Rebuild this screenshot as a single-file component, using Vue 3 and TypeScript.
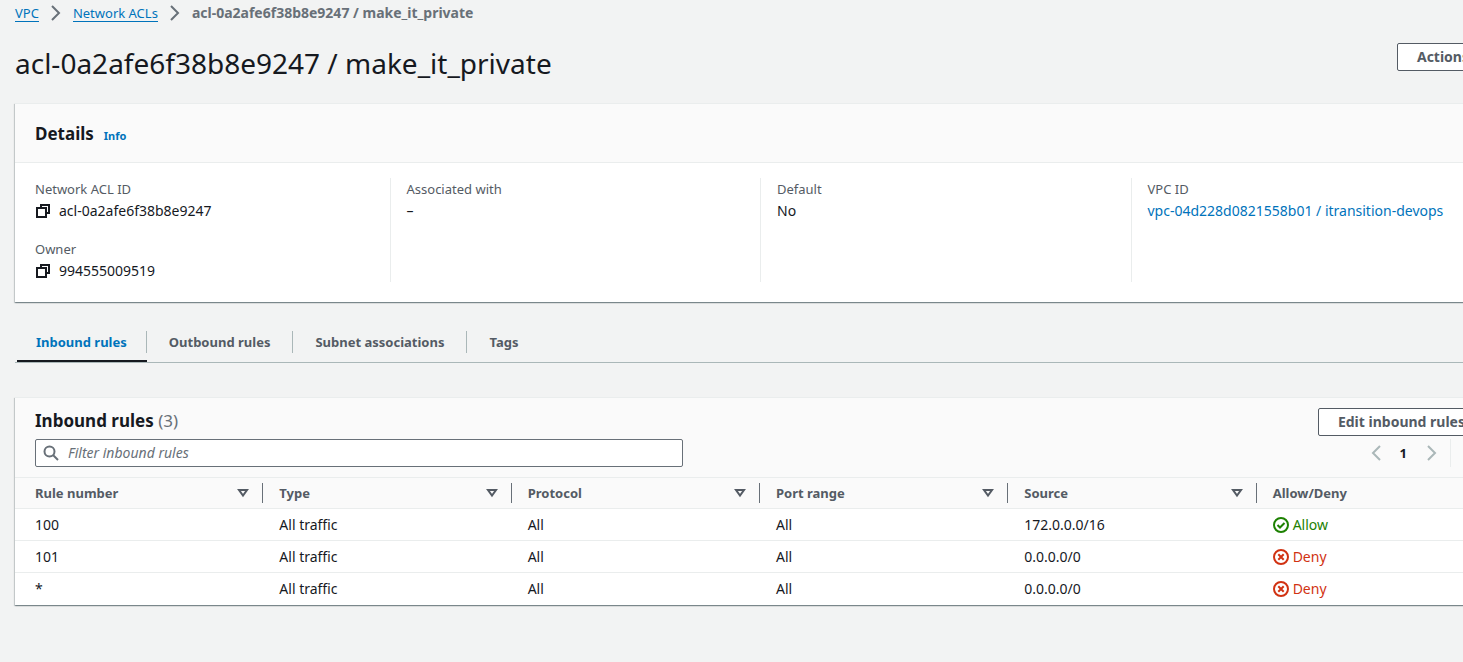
<script setup lang="ts">
import { ref } from 'vue'

interface Rule {
  number: string
  type: string
  protocol: string
  ports: string
  source: string
  allow: boolean
}

const tabs: string[] = ['Inbound rules', 'Outbound rules', 'Subnet associations', 'Tags']
const activeTab = ref<string>('Inbound rules')
const filter = ref<string>('')

const columns: string[] = ['Rule number', 'Type', 'Protocol', 'Port range', 'Source', 'Allow/Deny']

const rules: Rule[] = [
  { number: '100', type: 'All traffic', protocol: 'All', ports: 'All', source: '172.0.0.0/16', allow: true },
  { number: '101', type: 'All traffic', protocol: 'All', ports: 'All', source: '0.0.0.0/0', allow: false },
  { number: '*', type: 'All traffic', protocol: 'All', ports: 'All', source: '0.0.0.0/0', allow: false },
]
</script>

<template>
  <div class="viewport">
    <main class="page">
      <nav class="breadcrumbs" aria-label="Breadcrumbs">
        <a href="#">VPC</a>
        <svg class="crumb-sep" viewBox="0 0 16 16" aria-hidden="true"><path d="M4 1l7 7-7 7" /></svg>
        <a href="#">Network ACLs</a>
        <svg class="crumb-sep" viewBox="0 0 16 16" aria-hidden="true"><path d="M4 1l7 7-7 7" /></svg>
        <span class="current">acl-0a2afe6f38b8e9247 / make_it_private</span>
      </nav>

      <header class="title-row">
        <h1>acl-0a2afe6f38b8e9247 / make_it_private</h1>
        <button type="button" class="btn">
          Actions
          <svg class="caret" viewBox="0 0 16 16" aria-hidden="true"><path d="M4 5h8l-4 6z" /></svg>
        </button>
      </header>

      <section class="panel">
        <div class="panel-head details-head">
          <h2>Details</h2>
          <a href="#" class="info">Info</a>
        </div>
        <div class="details">
          <dl>
            <dt>Network ACL ID</dt>
            <dd>
              <button type="button" class="copy" aria-label="Copy network ACL ID">
                <svg viewBox="0 0 16 16"><path d="M2 5h9v9H2zM6 5V2h8v8h-3" /></svg>
              </button>
              acl-0a2afe6f38b8e9247
            </dd>
            <dt class="next">Owner</dt>
            <dd>
              <button type="button" class="copy" aria-label="Copy owner">
                <svg viewBox="0 0 16 16"><path d="M2 5h9v9H2zM6 5V2h8v8h-3" /></svg>
              </button>
              994555009519
            </dd>
          </dl>
          <dl>
            <dt>Associated with</dt>
            <dd>–</dd>
          </dl>
          <dl>
            <dt>Default</dt>
            <dd>No</dd>
          </dl>
          <dl>
            <dt>VPC ID</dt>
            <dd><a href="#">vpc-04d228d0821558b01 / itransition-devops</a></dd>
          </dl>
        </div>
      </section>

      <div class="tabs" role="tablist">
        <button
          v-for="tab in tabs"
          :key="tab"
          type="button"
          role="tab"
          class="tab"
          :class="{ active: tab === activeTab }"
          :aria-selected="tab === activeTab"
          @click="activeTab = tab"
        >
          <span>{{ tab }}</span>
        </button>
      </div>

      <section class="panel">
        <div class="panel-head rules-head">
          <div class="rules-title">
            <h2>Inbound rules <span class="count">(3)</span></h2>
            <button type="button" class="btn">Edit inbound rules</button>
          </div>
          <div class="tools">
            <label class="search">
              <svg viewBox="0 0 16 16" aria-hidden="true">
                <circle cx="6.500" cy="6.500" r="5" />
                <path d="M10 10l5 5" />
              </svg>
              <input v-model="filter" type="text" placeholder="Filter inbound rules" aria-label="Filter inbound rules" />
            </label>
            <div class="pager">
              <button type="button" aria-label="Previous page">
                <svg viewBox="0 0 16 16"><path d="M12 1L5 8l7 7" /></svg>
              </button>
              <b>1</b>
              <button type="button" aria-label="Next page">
                <svg viewBox="0 0 16 16"><path d="M5 1l7 7-7 7" /></svg>
              </button>
              <span class="divider"></span>
            </div>
          </div>
        </div>
        <table>
          <thead>
            <tr>
              <th v-for="column in columns" :key="column" scope="col">
                <div class="th">
                  {{ column }}
                  <svg viewBox="0 0 16 16" aria-hidden="true"><path d="M4 5h8l-4 5.500z" /></svg>
                </div>
              </th>
            </tr>
          </thead>
          <tbody>
            <tr v-for="rule in rules" :key="rule.number">
              <td>{{ rule.number }}</td>
              <td>{{ rule.type }}</td>
              <td>{{ rule.protocol }}</td>
              <td>{{ rule.ports }}</td>
              <td>{{ rule.source }}</td>
              <td>
                <span class="status" :class="rule.allow ? 'allow' : 'deny'">
                  <svg viewBox="0 0 16 16" aria-hidden="true">
                    <circle cx="8" cy="8" r="7" />
                    <path v-if="rule.allow" d="M4.500 8l2.500 2.500 4.500-4.500" />
                    <path v-else d="M5.300 5.300l5.400 5.400M10.700 5.300l-5.400 5.400" />
                  </svg>
                  {{ rule.allow ? 'Allow' : 'Deny' }}
                </span>
              </td>
            </tr>
          </tbody>
        </table>
      </section>
    </main>
  </div>
</template>

<style>
html,
body {
  margin: 0;
  background: #f2f3f3;
}
</style>

<style scoped>
.viewport {
  overflow: hidden;
  min-height: 100vh;
  background: #f2f3f3;
  color: #16191f;
  font: 14px/22px 'Noto Sans', 'Open Sans', sans-serif;
}
.page {
  box-sizing: border-box;
  width: calc(100% + 57px);
  padding: 2px 15px 40px;
}
svg {
  width: 16px;
  height: 16px;
  flex: none;
  fill: none;
  stroke: currentColor;
  stroke-width: 2;
}
button {
  font: inherit;
  color: inherit;
  cursor: pointer;
}
a {
  color: #0073bb;
  text-decoration: none;
}
.breadcrumbs {
  display: flex;
  align-items: center;
  gap: 9px;
}
.breadcrumbs a {
  font-size: 13px;
  line-height: 16px;
  border-bottom: 1px solid #0073bb;
}
.crumb-sep {
  color: #687078;
}
.current {
  color: #687078;
  font-weight: 700;
}
.title-row {
  display: flex;
  justify-content: space-between;
  align-items: flex-start;
  padding: 19px 0 20px;
}
h1 {
  margin: 0;
  font-size: 28px;
  line-height: 40px;
  font-weight: 400;
}
.btn {
  display: flex;
  align-items: center;
  gap: 7px;
  height: 28px;
  padding: 0 19px;
  border: 1px solid #545b64;
  border-radius: 2px;
  background: #fff;
  color: #545b64;
  font-weight: 700;
  white-space: nowrap;
}
.title-row .btn {
  padding-right: 12px;
}
.caret path {
  fill: currentColor;
}
.panel {
  background: #fff;
  border-top: 1px solid #eaeded;
  box-shadow: 0 1px 1px 0 rgba(0, 28, 36, 0.3), 1px 1px 1px 0 rgba(0, 28, 36, 0.15), -1px 1px 1px 0 rgba(0, 28, 36, 0.15);
}
.panel-head {
  background: #fafafa;
  border-bottom: 1px solid #eaeded;
}
h2 {
  margin: 0;
  font-size: 17px;
  line-height: 22px;
  font-weight: 700;
}
.details-head {
  display: flex;
  align-items: baseline;
  gap: 10px;
  padding: 19px 20px 17px;
}
.info {
  font-size: 11px;
  line-height: 14px;
  font-weight: 700;
}
.details {
  display: grid;
  grid-template-columns: repeat(4, 1fr);
  padding: 15px 4px 20px;
}
dl {
  margin: 0;
  padding: 0 15px 0 16px;
  min-height: 104px;
  box-sizing: border-box;
}
dl + dl {
  border-left: 1px solid #eaeded;
}
dt {
  color: #545b64;
  font-size: 13px;
}
dt.next {
  margin-top: 16px;
}
dd {
  display: flex;
  align-items: center;
  gap: 8px;
  margin: 0;
  white-space: nowrap;
}
.copy {
  display: flex;
  padding: 0;
  border: 0;
  background: none;
}
.tabs {
  display: flex;
  margin: 29px 0 34px;
  padding-left: 2px;
  border-bottom: 1px solid #aab7b8;
}
.tab {
  display: flex;
  padding: 0 0 7px;
  border: 0;
  border-bottom: 2px solid transparent;
  background: none;
  color: #545b64;
  font-size: 13px;
  font-weight: 700;
}
.tab span {
  padding: 0 19px;
  border-right: 1px solid #aab7b8;
}
.tab + .tab span {
  padding: 0 22px;
}
.tab:last-child span {
  border-right: 0;
}
.tab.active {
  color: #0073bb;
  border-bottom-color: #16191f;
}
.rules-head {
  padding: 10px 20px;
}
.rules-title {
  display: flex;
  justify-content: space-between;
  align-items: flex-start;
  height: 31px;
}
.rules-title h2 {
  line-height: 26px;
}
.count {
  color: #687078;
  font-weight: 400;
}
.tools {
  display: flex;
  justify-content: space-between;
  align-items: center;
}
.search {
  display: flex;
  align-items: center;
  gap: 9px;
  box-sizing: border-box;
  width: 648px;
  height: 28px;
  padding: 0 7px;
  border: 1px solid #687078;
  border-radius: 2px;
  background: #fff;
  color: #687078;
}
.search input {
  flex: 1;
  min-width: 0;
  padding: 0;
  border: 0;
  outline: 0;
  background: none;
  color: #16191f;
  font: inherit;
}
.search input::placeholder {
  color: #687078;
  font-style: italic;
  opacity: 1;
}
.pager {
  display: flex;
  align-items: center;
  gap: 16px;
  padding-right: 34px;
}
.pager b {
  font-size: 13px;
}
.pager button {
  display: flex;
  padding: 0;
  border: 0;
  background: none;
  color: #aab7b8;
}
.divider {
  height: 28px;
  margin-left: -5px;
  border-left: 1px solid #eaeded;
}
table {
  width: 100%;
  border-collapse: separate;
  border-spacing: 0;
  table-layout: fixed;
}
th {
  padding: 5px 0;
  background: #fafafa;
  border-bottom: 1px solid #eaeded;
  color: #545b64;
  font-size: 13px;
  text-align: left;
}
.th {
  display: flex;
  justify-content: space-between;
  align-items: center;
  height: 20px;
  padding: 0 11px 0 16px;
  border-right: 1px solid #687078;
}
td {
  height: 31px;
  padding: 0 16px;
  border-bottom: 1px solid #eaeded;
}
th:first-child .th,
td:first-child {
  padding-left: 20px;
}
th:last-child .th {
  border-right: 0;
}
tbody tr:last-child td {
  height: 32px;
  border-bottom: 0;
}
.status {
  display: flex;
  align-items: center;
  gap: 4px;
}
.allow {
  color: #1d8102;
}
.deny {
  color: #d13212;
}
</style>
